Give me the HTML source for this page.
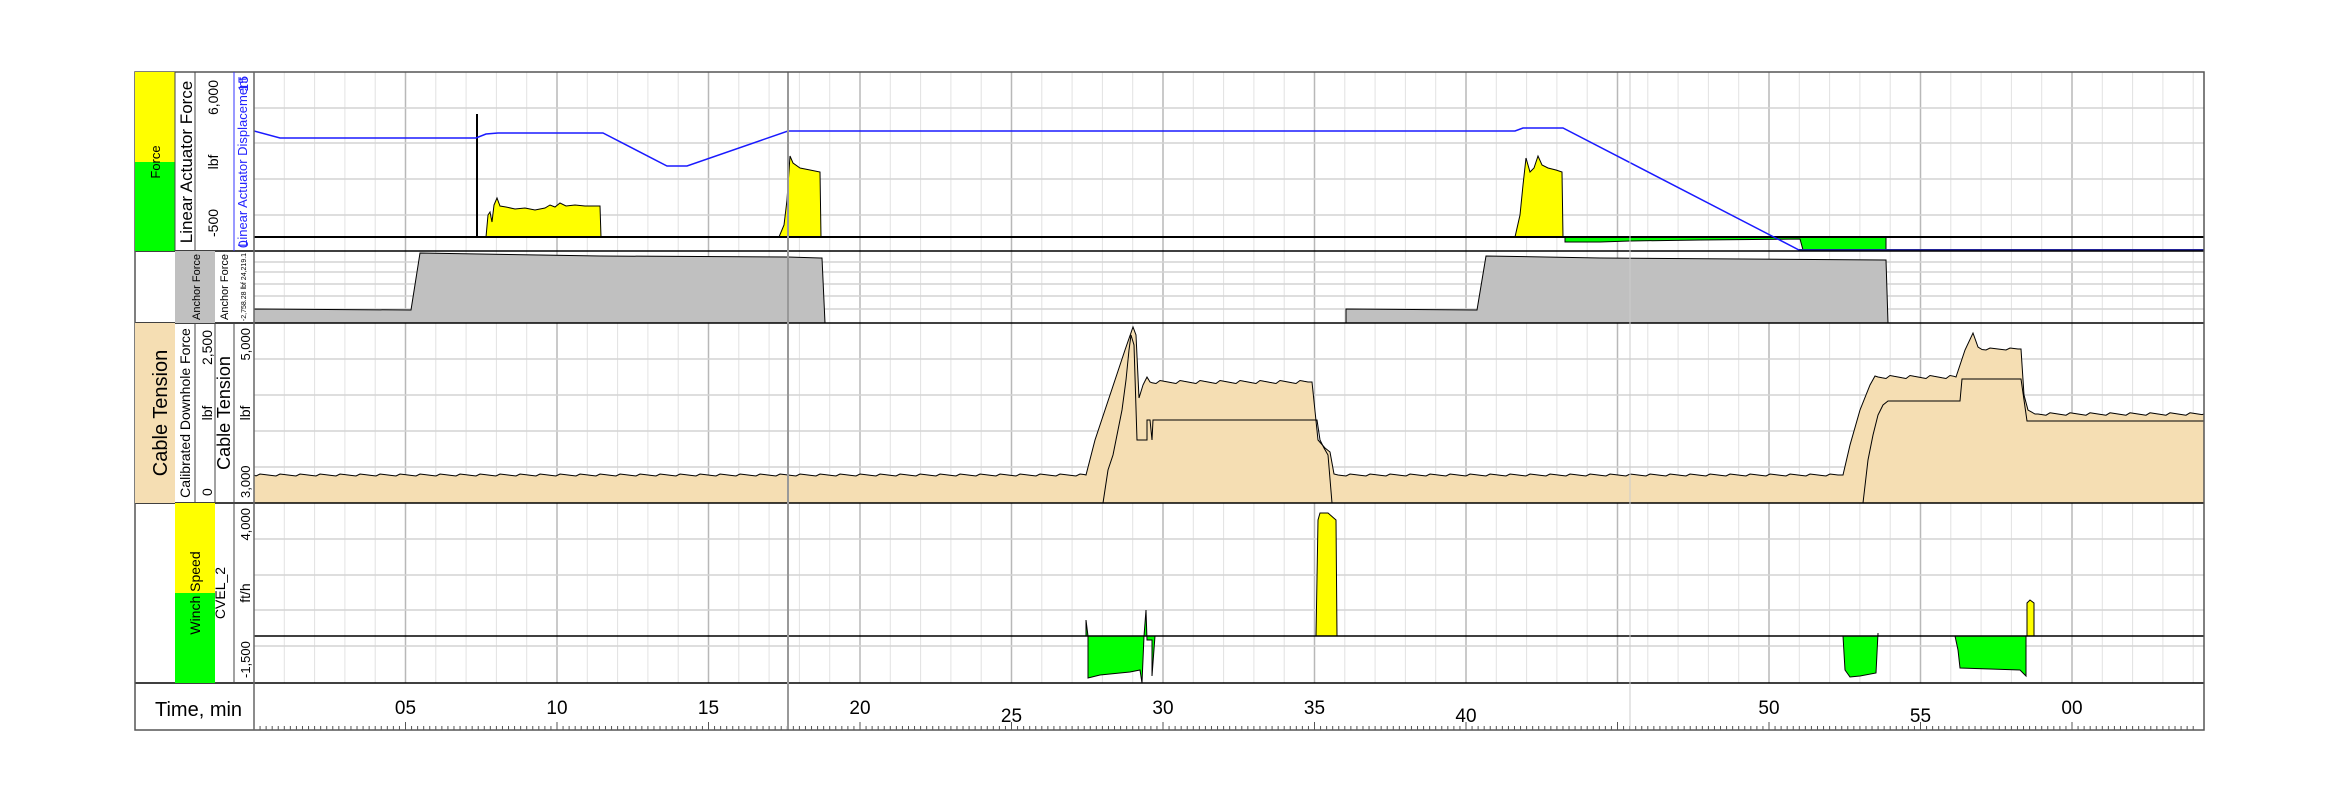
<!DOCTYPE html>
<html><head><meta charset="utf-8">
<style>
html,body{margin:0;padding:0;background:#fff;}
svg{display:block;font-family:"Liberation Sans",sans-serif;}
</style></head>
<body>
<svg id="s" width="2336" height="800" xmlns="http://www.w3.org/2000/svg">
<rect width="2336" height="800" fill="#fff"/>
<g id="grid"></g>

<path d="M476,237 L476,114 L478,114 L478,237 Z" fill="#000"/>
<path d="M486,237 L488,215 L490,212 L492,222 L494,205 L497,198 L500,206 L506,207 L515,209 L525,208 L535,210 L545,208 L550,205 L555,207 L560,203 L566,206 L575,205 L585,206 L595,206 L600,206 L601,237 Z" fill="#ff0" stroke="#000" stroke-width="1"/>
<path d="M779,237 L784,225 L787,200 L790,156 L793,163 L800,168 L810,170 L820,172 L821,237 Z" fill="#ff0" stroke="#000" stroke-width="1"/>
<path d="M1515,237 L1520,215 L1523,185 L1526,158 L1530,172 L1534,168 L1538,156 L1542,165 L1548,168 L1556,170 L1562,172 L1563,237 Z" fill="#ff0" stroke="#000" stroke-width="1"/>
<path d="M1565,237 L1565,242 L1600,242 L1630,241 L1700,240 L1800,239 L1803,250 L1886,250 L1886,237 Z" fill="#0f0" stroke="#000" stroke-width="1"/>
<line x1="254" y1="237" x2="2204" y2="237" stroke="#000" stroke-width="2"/>
<polyline points="254,131 280,138 476,138 486,134 498,133 603,133 667,166 687,166 788,131 1515,131 1523,128 1563,128 1799,250 2204,250" fill="none" stroke="#1a1aff" stroke-width="1.5"/>
<line x1="1799" y1="250" x2="2204" y2="250" stroke="#22229a" stroke-width="2"/>

<path d="M254,323 L254,309 L411,310 L420,253 L600,256 L788,257 L820,258 L822,258 L825,323 Z" fill="#c0c0c0" stroke="#000" stroke-width="1"/>
<path d="M1346,323 L1346,309 L1477,310 L1486,256 L1600,258 L1886,260 L1888,323 Z" fill="#c0c0c0" stroke="#000" stroke-width="1"/>

<path id="ct" fill="#f5deb3" stroke="#000" stroke-width="1" d=""/>
<polyline points="1103,503 1108,470 1113,455 1118,430 1122,410 1126,380 1129,350 1131,335 1134,345 1137,440 1147,440 1147,420 1150,420 1152,440 1153,420 1317,420 1320,440 1324,448 1328,455 1332,503" fill="none" stroke="#000" stroke-width="1"/>
<polyline points="1863,503 1868,460 1873,435 1878,415 1883,405 1888,401 1960,401 1962,379 1968,379 2021,379 2024,400 2027,421 2204,421" fill="none" stroke="#000" stroke-width="1"/>

<path d="M1086,636 L1086,620 L1088,636 L1088,678 L1100,675 L1130,672 L1140,670 L1142,683 L1144,636 L1146,610 L1147,640 L1152,640 L1152,676 L1155,636 Z" fill="#0f0" stroke="#000" stroke-width="1"/>
<path d="M1316,636 L1318,520 L1320,513 L1328,513 L1336,520 L1337,636 Z" fill="#ff0" stroke="#000" stroke-width="1"/>
<path d="M1843,636 L1845,670 L1850,677 L1860,676 L1876,673 L1878,633 L1878,636 Z" fill="#0f0" stroke="#000" stroke-width="1"/>
<path d="M1955,636 L1958,650 L1960,668 L1990,669 L2020,670 L2026,676 L2026,636 Z" fill="#0f0" stroke="#000" stroke-width="1"/>
<path d="M2027,636 L2027,603 L2030,600 L2034,603 L2034,636 Z" fill="#ff0" stroke="#000" stroke-width="1"/>
<line x1="254" y1="636" x2="2204" y2="636" stroke="#000" stroke-width="1.5"/>

<g stroke="#000" stroke-width="1.5">
<line x1="135" y1="251" x2="2204" y2="251"/>
<line x1="135" y1="323" x2="2204" y2="323"/>
<line x1="135" y1="503" x2="2204" y2="503"/>
<line x1="135" y1="683" x2="2204" y2="683"/>
</g>
<line x1="788" y1="72" x2="788" y2="730" stroke="#999" stroke-width="2"/>
<line x1="1630" y1="72" x2="1630" y2="730" stroke="#ccc" stroke-width="1"/>
<rect x="135" y="72" width="2069" height="658" fill="none" stroke="#555" stroke-width="1.5"/>

<rect x="135" y="72" width="40" height="90" fill="#ff0"/>
<rect x="135" y="162" width="40" height="89" fill="#0f0"/>
<rect x="175" y="251" width="40" height="72" fill="#c0c0c0"/>
<rect x="135" y="323" width="40" height="180" fill="#f5deb3"/>
<rect x="175" y="503" width="40" height="90" fill="#ff0"/>
<rect x="175" y="593" width="40" height="90" fill="#0f0"/>
<g stroke="#444" stroke-width="1">
<line x1="175" y1="72" x2="175" y2="251"/>
<line x1="195" y1="72" x2="195" y2="251"/>
<line x1="234" y1="72" x2="234" y2="251" stroke="#33f"/>
<line x1="195" y1="323" x2="195" y2="503"/>
<line x1="215" y1="323" x2="215" y2="503"/>
<line x1="234" y1="323" x2="234" y2="683"/>
<line x1="254" y1="72" x2="254" y2="730" stroke="#666" stroke-width="1.5"/>
</g>
<g font-size="13">
<text transform="translate(160,162) rotate(-90)" text-anchor="middle">Force</text>
<text transform="translate(192,162) rotate(-90)" text-anchor="middle" font-size="17">Linear Actuator Force</text>
<text transform="translate(218,237) rotate(-90)" font-size="14">-500</text>
<text transform="translate(218,162) rotate(-90)" text-anchor="middle" font-size="14">lbf</text>
<text transform="translate(218,80) rotate(-90)" text-anchor="end" font-size="14">6,000</text>
<text transform="translate(247,162) rotate(-90)" text-anchor="middle" font-size="13" fill="#22f">Linear Actuator Displacement</text>
<text transform="translate(248,248) rotate(-90)" font-size="14" fill="#22f">0</text>
<text transform="translate(248,76) rotate(-90)" text-anchor="end" font-size="14" fill="#22f">15</text>
<text transform="translate(200,287) rotate(-90)" text-anchor="middle" font-size="11">Anchor Force</text>
<text transform="translate(228,287) rotate(-90)" text-anchor="middle" font-size="11">Anchor Force</text>
<text transform="translate(246,287) rotate(-90)" text-anchor="middle" font-size="7">-2,758.28  lbf  24,219.1</text>
<text transform="translate(167,413) rotate(-90)" text-anchor="middle" font-size="20">Cable Tension</text>
<text transform="translate(190,413) rotate(-90)" text-anchor="middle" font-size="14">Calibrated Downhole Force</text>
<text transform="translate(212,496) rotate(-90)" font-size="14">0</text>
<text transform="translate(212,413) rotate(-90)" text-anchor="middle" font-size="14">lbf</text>
<text transform="translate(212,330) rotate(-90)" text-anchor="end" font-size="14">2,500</text>
<text transform="translate(230,413) rotate(-90)" text-anchor="middle" font-size="18">Cable Tension</text>
<text transform="translate(250,498) rotate(-90)" font-size="13">3,000</text>
<text transform="translate(250,413) rotate(-90)" text-anchor="middle" font-size="14">lbf</text>
<text transform="translate(250,328) rotate(-90)" text-anchor="end" font-size="13">5,000</text>
<text transform="translate(200,593) rotate(-90)" text-anchor="middle" font-size="14">Winch Speed</text>
<text transform="translate(225,593) rotate(-90)" text-anchor="middle" font-size="14">CVEL_2</text>
<text transform="translate(250,678) rotate(-90)" font-size="13">-1,500</text>
<text transform="translate(250,593) rotate(-90)" text-anchor="middle" font-size="14">ft/h</text>
<text transform="translate(250,508) rotate(-90)" text-anchor="end" font-size="13">4,000</text>
</g>
<text x="155" y="716" font-size="20">Time, min</text>
<g id="tl" font-size="19" text-anchor="middle"></g>
</svg>
<script>
var NS="http://www.w3.org/2000/svg";
function el(t,a,p){var e=document.createElementNS(NS,t);for(var k in a)e.setAttribute(k,a[k]);(p||document.getElementById('grid')).appendChild(e);return e;}
var x0=254,ppm=30.3,xr=2204;
for(var m=1;m<65;m++){var x=x0+m*ppm;if(x>xr)break;
 el('line',{x1:x,y1:72,x2:x,y2:683,stroke:(m%5==0)?'#b8b8b8':'#e2e2e2','stroke-width':(m%5==0)?1.5:1});}
[108,143,179,215, 262,272,284,296,309, 359,395,431,467, 539,575,610,646].forEach(function(y){
 el('line',{x1:x0,y1:y,x2:xr,y2:y,stroke:'#d4d4d4','stroke-width':1.5});});
for(var i=1;i<=64*5;i++){var x=x0+i*ppm/5;if(x>xr)break;
 var big=i%25==0;el('line',{x1:x,y1:big?722:726,x2:x,y2:730,stroke:'#555','stroke-width':1});}
var labs={5:'05',10:'10',15:'15',20:'20',25:'25',30:'30',35:'35',40:'40',50:'50',55:'55',60:'00'};
var low={25:1,40:1,55:1};
for(var k in labs){var t=el('text',{x:x0+k*ppm,y:low[k]?722:714},document.getElementById('tl'));t.textContent=labs[k];}
function noise(a,b,y,amp){var s='';for(var x=a;x<=b;x+=4){s+=' L'+x+','+(y+((x*7919)%5-2)*amp/2).toFixed(1);}return s;}
var d='M254,503 L254,475'+noise(256,1084,475,1)+' L1086,475 L1095,440 L1105,410 L1115,380 L1125,350 L1133,327 L1136,335 L1139,398 L1143,385 L1147,377 L1150,382'+noise(1152,1310,382,1.5)+' L1312,382 L1318,440 L1325,448 L1330,452 L1334,474'+noise(1338,1840,475,1)+' L1843,475 L1850,445 L1860,410 L1870,385 L1875,376'+noise(1878,1954,377,1.5)+' L1956,377 L1965,350 L1973,333 L1978,347'+noise(1982,2018,349,1)+' L2021,349 L2024,395 L2028,410 L2035,414'+noise(2038,2202,414,1.2)+' L2204,414 L2204,503 Z';
document.getElementById('ct').setAttribute('d',d);
</script>
</body></html>
